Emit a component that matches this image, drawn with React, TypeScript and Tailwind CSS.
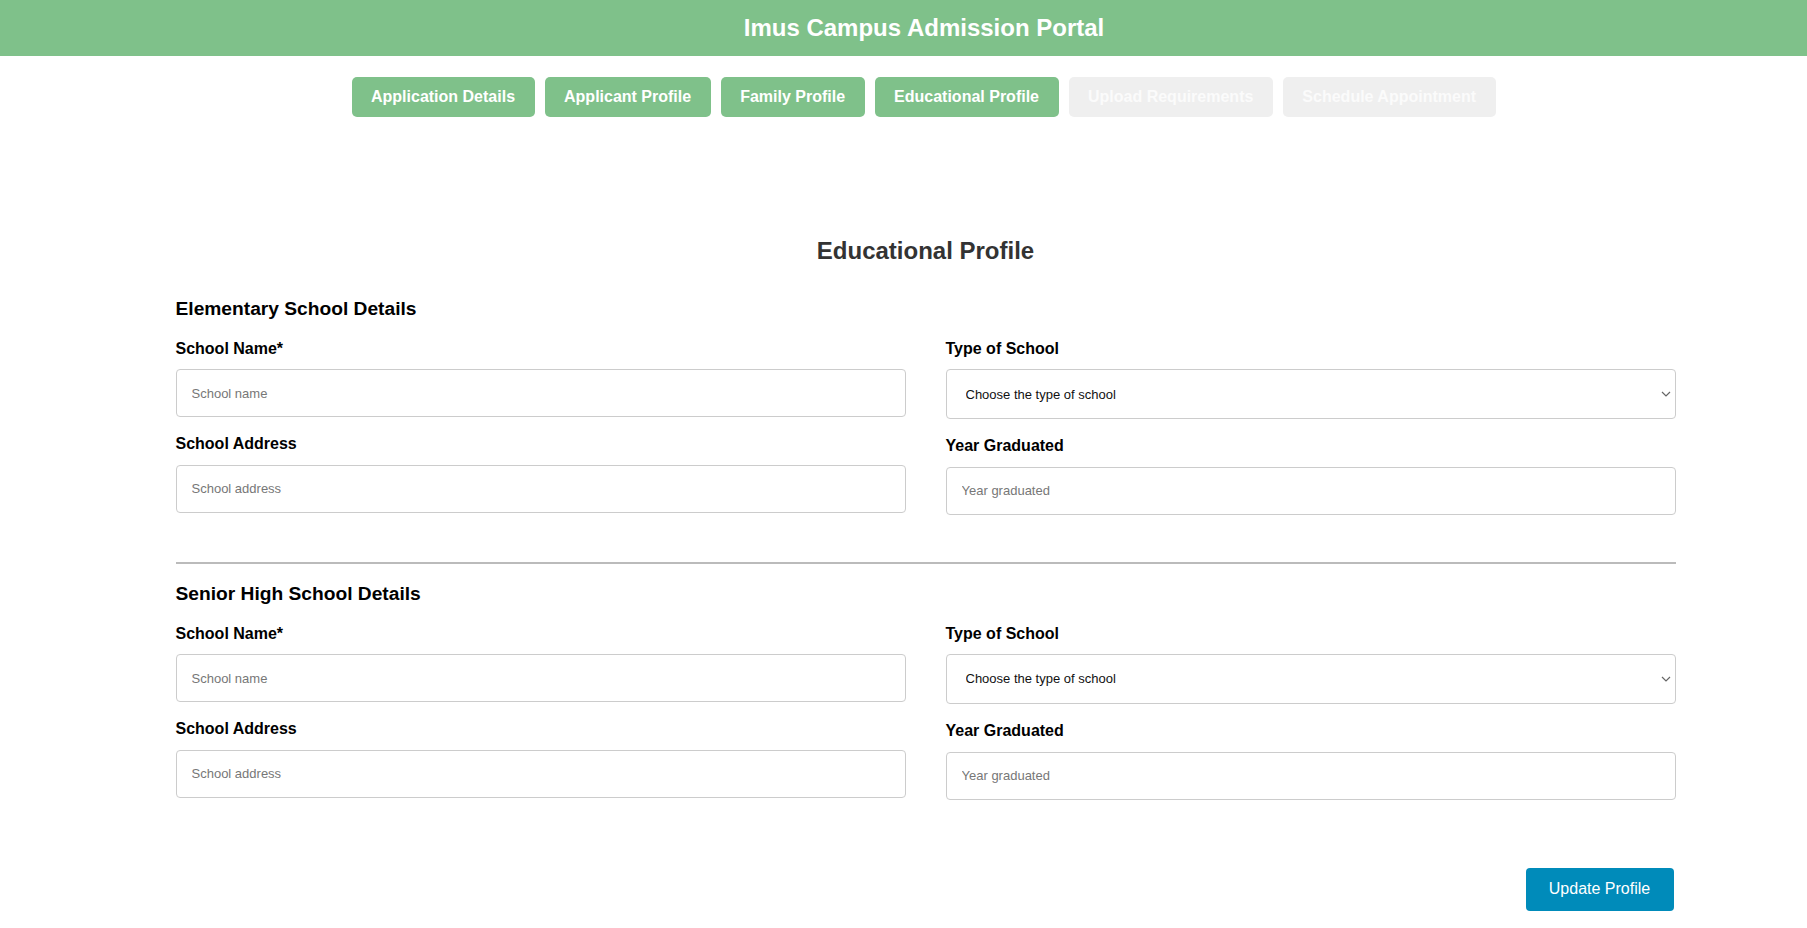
import { useState } from "react";

type Tab = {
  label: string;
  enabled: boolean;
};

const tabs: Tab[] = [
  { label: "Application Details", enabled: true },
  { label: "Applicant Profile", enabled: true },
  { label: "Family Profile", enabled: true },
  { label: "Educational Profile", enabled: true },
  { label: "Upload Requirements", enabled: false },
  { label: "Schedule Appointment", enabled: false },
];

const Label = ({ children }: { children: React.ReactNode }) => (
  <label className="block text-[16px] leading-[18.4px] font-bold text-black">
    {children}
  </label>
);

const TextField = ({ placeholder }: { placeholder: string }) => (
  <input
    type="text"
    placeholder={placeholder}
    className="mt-[11px] block h-[48px] w-full rounded-[4px] border border-[#cccccc] bg-white pl-[15px] text-[13px] text-[#222] placeholder:text-[#777] outline-none"
  />
);

const SchoolTypeSelect = () => {
  const [value, setValue] = useState("");
  return (
    <div className="relative mt-[11px]">
      <select
        value={value}
        onChange={(e) => setValue(e.target.value)}
        className="block h-[50px] w-full appearance-none rounded-[4px] border border-[#cccccc] bg-white pl-[19px] text-[13px] text-[#111] outline-none"
      >
        <option value="">Choose the type of school</option>
        <option value="public">Public</option>
        <option value="private">Private</option>
      </select>
      <svg
        className="pointer-events-none absolute right-[5px] top-[22px]"
        width="10"
        height="6"
        viewBox="0 0 10 6"
        fill="none"
      >
        <path d="M1 1l4 4 4-4" stroke="#666" strokeWidth="1.2" />
      </svg>
    </div>
  );
};

const SchoolSection = ({ title }: { title: string }) => (
  <section>
    <h3 className="text-[19.2px] leading-[22px] font-bold text-black">
      {title}
    </h3>
    <div className="mt-5 grid grid-cols-2 gap-x-10">
      <div>
        <Label>School Name*</Label>
        <TextField placeholder="School name" />
        <div className="mt-[18px]">
          <Label>School Address</Label>
          <TextField placeholder="School address" />
        </div>
      </div>
      <div>
        <Label>Type of School</Label>
        <SchoolTypeSelect />
        <div className="mt-[18px]">
          <Label>Year Graduated</Label>
          <TextField placeholder="Year graduated" />
        </div>
      </div>
    </div>
  </section>
);

export default function App() {
  return (
    <div className="min-h-screen bg-white font-['Liberation_Sans',Arial,sans-serif]">
      <header className="flex h-14 items-center justify-center bg-[#7fc18a] pl-[41px]">
        <h1 className="text-[24px] font-bold text-white">
          Imus Campus Admission Portal
        </h1>
      </header>

      <nav className="mt-[21px] flex justify-center gap-2.5 pl-[40px]">
        {tabs.map((tab) => (
          <button
            key={tab.label}
            disabled={!tab.enabled}
            className={
              tab.enabled
                ? "h-10 rounded-[5px] bg-[#7fc18a] px-[19.5px] text-[16px] font-bold text-white"
                : "h-10 rounded-[5px] bg-[#efefef] px-[19.5px] text-[16px] font-bold text-[#fbfbfb]"
            }
          >
            {tab.label}
          </button>
        ))}
      </nav>

      <div className="pl-[44px]">
        <main className="mx-auto w-[1500px] pb-4">
          <h2 className="mt-[116px] text-center text-[24px] font-bold text-[#333]">
            Educational Profile
          </h2>

          <div className="mt-[29px]">
            <SchoolSection title="Elementary School Details" />
          </div>

          <hr className="mt-[47px] border-t-2 border-[#bbbbbb]" />

          <div className="mt-[19px]">
            <SchoolSection title="Senior High School Details" />
          </div>

          <div className="mt-[68px] flex justify-end pr-[2px]">
            <button className="h-[43px] w-[148px] rounded-[4px] bg-[#008bba] text-[16px] text-white">
              Update Profile
            </button>
          </div>
        </main>
      </div>
    </div>
  );
}
